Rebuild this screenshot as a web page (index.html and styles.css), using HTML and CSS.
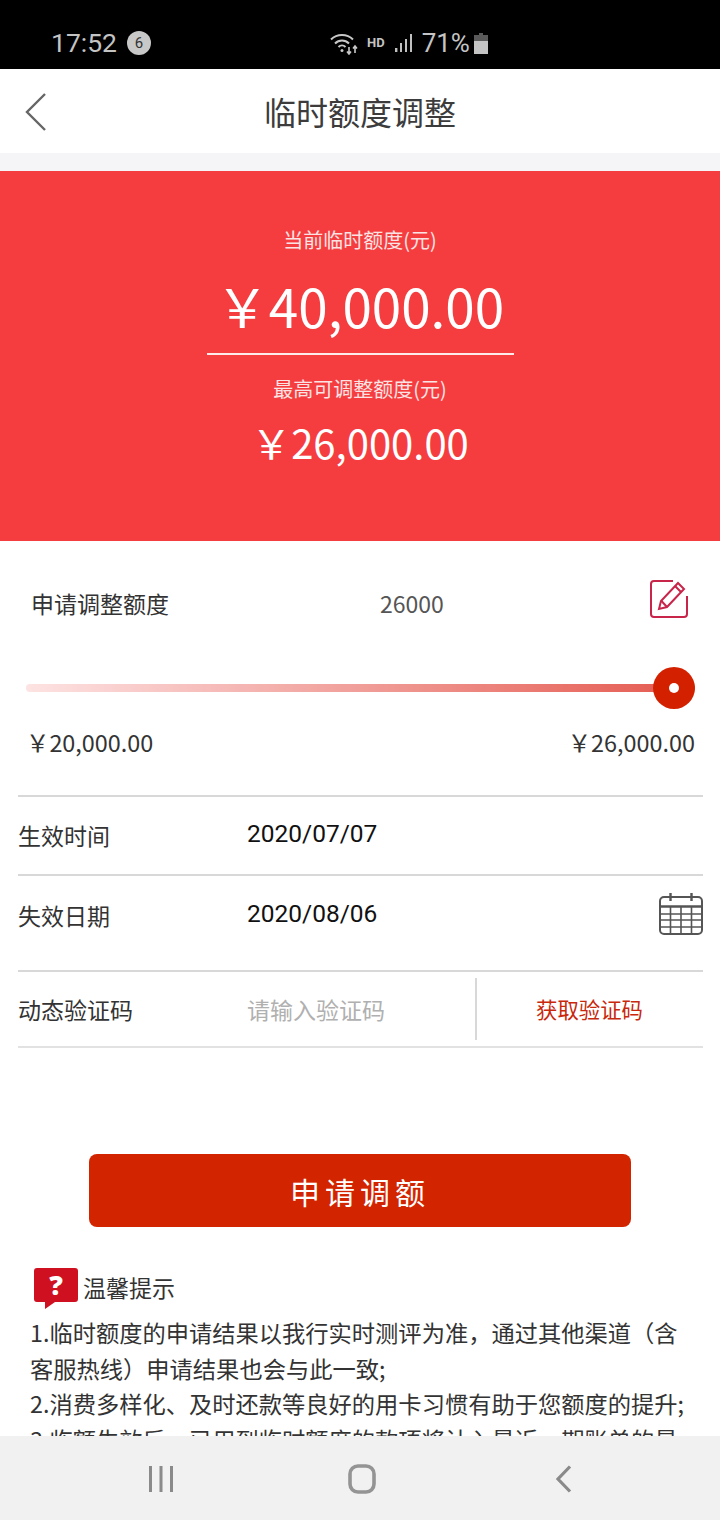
FILE: index.html
```html
<!DOCTYPE html>
<html lang="zh-CN">
<head>
<meta charset="utf-8">
<title>临时额度调整</title>
<link rel="stylesheet" href="styles.css">
</head>
<body>
<div class="screen">
  <div class="status">
    <div class="status-left"><span class="time">17:52</span><span class="badge">6</span></div>
    <div class="status-mid">
      <svg class="wifi" width="30" height="24" viewBox="0 0 30 24" fill="none" stroke="#c8c8c8" stroke-width="2"><path d="M2 8.500C8 2.500 18 2.500 24 8.500"/><path d="M6 12.500C10 8.500 16 8.500 20 12.500"/><path d="M9.500 16C11.500 14 14.500 14 16.500 16"/><circle cx="13" cy="19.500" r="1.500" fill="#c8c8c8" stroke="none"/><path d="M20 16v7M18 20.500l2 2.500 2-2.500M26 22v-7M24 17.500l2-2.500 2 2.500" stroke-width="1.600"/></svg>
      <span class="hd">HD</span>
      <svg class="signal" width="20" height="20" viewBox="0 0 20 20" fill="#c0c0c0"><rect x="1" y="15" width="2.400" height="4"/><rect x="6" y="10" width="2" height="9"/><rect x="11" y="6" width="2" height="13"/><rect x="16" y="1" width="2" height="18"/></svg>
      <span class="pct">71%</span>
      <svg class="battery" width="14" height="21" viewBox="0 0 14 21"><path d="M5 0h4v2h5v6H0V2h5z" fill="#5a5a5a"/><rect x="0" y="8" width="14" height="13" fill="#c4c4c4"/></svg>
    </div>
  </div>

  <header class="title-bar">
    <svg class="back" width="24" height="40" viewBox="0 0 24 40" fill="none" stroke="#666" stroke-width="2.400"><path d="M21 2L3 20l18 18"/></svg>
    <h1 class="title">临时额度调整</h1>
  </header>

  <section class="hero">
    <p class="hero-label">当前临时额度(元)</p>
    <p class="hero-amount">￥40,000.00</p>
    <div class="hero-rule"></div>
    <p class="hero-label hero-label-2">最高可调整额度(元)</p>
    <p class="hero-max">￥26,000.00</p>
  </section>

  <section class="adjust">
    <div class="adjust-row">
      <span class="adjust-label">申请调整额度</span>
      <span class="adjust-value">26000</span>
      <svg class="edit" width="40" height="40" viewBox="0 0 40 40" fill="none" stroke="#c8254a" stroke-width="2"><path d="M24 2H5a3 3 0 0 0-3 3v30a3 3 0 0 0 3 3h30a3 3 0 0 0 3-3V17"/><path d="M10 30l2-8L29 4l6 6-17 18z"/><path d="M26 7l6 6M12.500 22l5.500 6"/></svg>
    </div>
    <div class="slider">
      <div class="track"></div>
      <div class="thumb"></div>
    </div>
    <div class="range"><span>￥20,000.00</span><span>￥26,000.00</span></div>
  </section>

  <section class="form">
    <div class="form-row row-a"><span class="form-label">生效时间</span><span class="form-date">2020/07/07</span></div>
    <div class="form-row row-b">
      <span class="form-label">失效日期</span><span class="form-date">2020/08/06</span>
      <svg class="calendar" width="44" height="44" viewBox="0 0 44 44" fill="none" stroke="#555" stroke-width="2"><rect x="1" y="5" width="42" height="37" rx="4"/><path d="M1 14.500h42" stroke-width="2.600"/><path d="M1 22h42M1 28h42M1 35h42M11.500 14v28M22 14v28M32.500 14v28" stroke-width="1.600"/><path d="M11.500 1v8M32.500 1v8" stroke-width="2.400"/></svg>
    </div>
    <div class="form-row row-c">
      <span class="form-label">动态验证码</span>
      <span class="code-input">请输入验证码</span>
      <span class="code-btn">获取验证码</span>
    </div>
  </section>

  <button class="submit">申请调额</button>

  <section class="tips">
    <div class="tips-head">
      <svg class="tips-icon" width="44" height="41" viewBox="0 0 44 41"><path d="M3 0h38a3 3 0 0 1 3 3v28a3 3 0 0 1-3 3H21l-10 7 0-7H3a3 3 0 0 1-3-3V3a3 3 0 0 1 3-3z" fill="#cf1020"/></svg>
      <span class="tips-q">?</span>
      <span class="tips-title">温馨提示</span>
    </div>
    <p class="tips-text">1.临时额度的申请结果以我行实时测评为准，通过其他渠道（含客服热线）申请结果也会与此一致;<br>2.消费多样化、及时还款等良好的用卡习惯有助于您额度的提升;<br>3.临额生效后，已用到临时额度的款项将计入最近一期账单的最低还款额。</p>
  </section>

  <nav class="nav">
    <svg width="28" height="28" viewBox="0 0 28 28" fill="#8a8a8a"><rect x="2" y="1" width="3" height="26"/><rect x="12.500" y="1" width="3" height="26"/><rect x="23" y="1" width="3" height="26"/></svg>
    <svg width="30" height="30" viewBox="0 0 30 30" fill="none" stroke="#949494" stroke-width="3.600"><rect x="3" y="2" width="24" height="26" rx="8"/></svg>
    <svg width="18" height="28" viewBox="0 0 18 28" fill="none" stroke="#8a8a8a" stroke-width="3.200"><path d="M15 1.500L3 14l12 12.500"/></svg>
  </nav>
</div>
</body>
</html>
```
FILE: styles.css
```css
* { box-sizing: border-box; margin: 0; padding: 0; }
html, body { width: 720px; height: 1520px; overflow: hidden; background: #fff; }
body { font-family: "Noto Sans CJK SC", "Noto Sans", sans-serif; color: #333; }
.screen { position: relative; width: 720px; height: 1520px; overflow: hidden; background: #fff; }

.status { height: 69px; background: #000; color: #c4c4c4; position: relative; display: flex; align-items: center; padding: 17px 0 0 51px; }
.status-left { display: flex; align-items: center; gap: 10px; }
.time { font: 26.500px/32px Roboto, sans-serif; }
.badge { width: 24px; height: 24px; border-radius: 50%; background: #c8c8c8; color: #333; font: 15px/24px Roboto, sans-serif; text-align: center; }
.status-mid { display: flex; align-items: center; margin-left: 178px; }
.wifi { margin-right: 8px; }
.hd { font: bold 13px/14px Roboto, sans-serif; margin-right: 9px; }
.signal { margin-right: 8px; }
.pct { font: 26px/32px Roboto, sans-serif; margin-right: 4px; }

.title-bar { height: 84px; position: relative; display: flex; align-items: center; justify-content: center; }
.back { position: absolute; left: 24px; top: 23px; }
.title { font-size: 32px; font-weight: 400; line-height: 44px; color: #3c3c3c; margin-top: -1px; }

.hero { margin-top: 18px; height: 370px; background: #f53d40; color: #fff; display: flex; flex-direction: column; align-items: center; padding-top: 55px; box-shadow: 0 -18px 0 #f5f5f7; }
.hero-label { font-size: 20px; line-height: 28px; color: #fbe3e3; }
.hero-amount { font-size: 53px; line-height: 74px; margin-top: 14px; width: 307px; text-align: center; }
.hero-rule { width: 307px; height: 2px; background: #fdeaea; margin-top: 11px; }
.hero-label-2 { margin-top: 20px; }
.hero-max { font-size: 40px; line-height: 54px; margin-top: 12px; }

.adjust { height: 254px; padding: 0 25px 0 26px; position: relative; }
.adjust-row { display: flex; align-items: center; height: 116px; position: relative; padding: 8px 0 0 5px; }
.adjust-label { font-size: 23px; color: #333; width: 349px; }
.adjust-value { font-size: 23px; color: #555; }
.edit { position: absolute; left: 623px; top: 38px; }
.slider { position: relative; height: 42px; margin-top: 10px; display: flex; align-items: center; }
.track { width: 100%; height: 8px; border-radius: 4px; background: linear-gradient(90deg, #fde3e3, #e4584e); }
.thumb { position: absolute; right: 0; top: 0; width: 42px; height: 42px; border-radius: 50%; background: #d32100; }
.thumb::after { content: ""; position: absolute; left: 16px; top: 16px; width: 10px; height: 10px; border-radius: 50%; background: #fff; }
.range { display: flex; justify-content: space-between; font-size: 23.400px; line-height: 32px; color: #333; margin-top: 17px; }

.form { padding: 0 17px 0 18px; }
.form-row { display: flex; align-items: center; position: relative; border-top: 2px solid #d8d8d8; }
.row-a { height: 79px; padding-bottom: 2px; }
.row-b { height: 96px; padding-bottom: 17px; }
.row-c { height: 78px; border-bottom: 2px solid #e2e2e2; }
.form-label { font-size: 23px; width: 229px; color: #333; }
.form-date { font: 24.500px/32px Roboto, sans-serif; color: #111; margin-bottom: 2px; }
.calendar { position: absolute; right: 0; top: 16px; }
.code-input { font-size: 23px; color: #b0b0b0; width: 228px; }
.code-btn { font-size: 21.400px; color: #c8280c; border-left: 2px solid #d8d8d8; height: 62px; line-height: 62px; width: 227px; text-align: center; }

.submit { display: block; width: 542px; height: 73px; margin: 106px 0 0 89px; background: #d32400; color: #fff; border: 0; border-radius: 8px; font: 30px "Noto Sans CJK SC", sans-serif; letter-spacing: 5px; }

.tips { padding: 0 26px 0 30px; margin-top: 41px; }
.tips-head { position: relative; display: flex; align-items: center; height: 41px; padding-left: 4px; }
.tips-q { position: absolute; left: 4px; top: 0; width: 44px; height: 34px; text-align: center; color: #fff; font: 800 27px/34px "Open Sans", sans-serif; }
.tips-title { font-size: 23px; line-height: 30px; margin-left: 5px; margin-top: -4px; color: #333; }
.tips-text { font-size: 23.280px; line-height: 35.500px; color: #333; margin-top: 6px; }

.nav { position: absolute; left: 0; bottom: 0; width: 720px; height: 84px; background: #f1f1f1; }
.nav svg { position: absolute; }
.nav svg:nth-child(1) { left: 147px; top: 29px; }
.nav svg:nth-child(2) { left: 347px; top: 28px; }
.nav svg:nth-child(3) { left: 555px; top: 29px; }
```
